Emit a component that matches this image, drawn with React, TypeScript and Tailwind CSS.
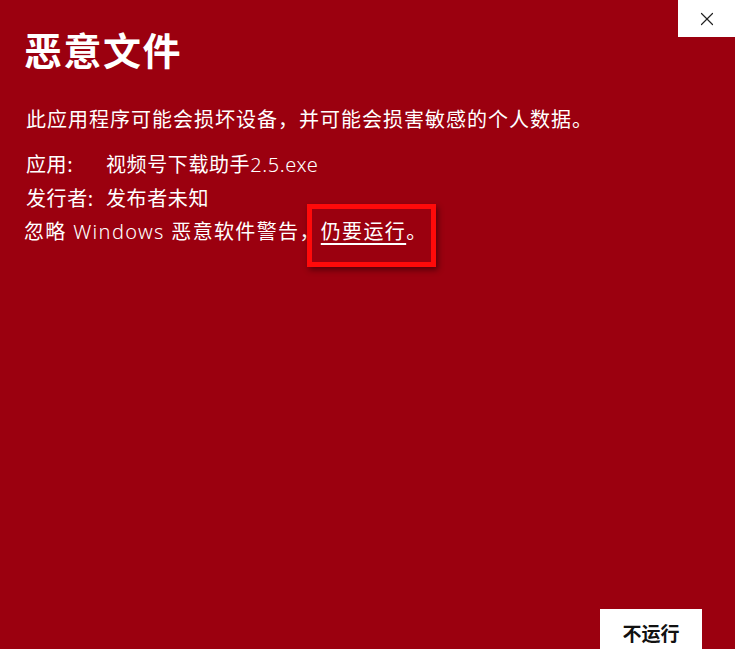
import { X } from 'lucide-react';

const FONT = "font-['Noto_Sans','Noto_Sans_CJK_SC',sans-serif]";

export default function App() {
  return (
    <div className={`relative h-[649px] w-[735px] overflow-hidden bg-[#9b000f] text-white ${FONT}`}>
      {/* close */}
      <button className="absolute right-0 top-0 flex h-[37px] w-[57px] items-center justify-center bg-white text-[#222]">
        <X size={22} strokeWidth={1.3} />
      </button>

      <div className="px-6 pt-[26px]">
        <h1 className="text-[38px] font-bold leading-[48px] tracking-[1.5px]">恶意文件</h1>

        <p className="mt-[31px] pl-[2px] text-[20px] leading-[30px] tracking-[1px]">
          此应用程序可能会损坏设备，并可能会损害敏感的个人数据。
        </p>

        <div className="mt-[13px] text-[20px] leading-[33.5px] tracking-[0.6px]">
          <div className="flex pl-[2px]">
            <span className="w-[80px]">应用:</span>
            <span>
              视频号下载助手<span className="font-light">2.5.exe</span>
            </span>
          </div>
          <div className="flex pl-[2px]">
            <span className="w-[80px]">发行者:</span>
            <span>发布者未知</span>
          </div>
          <div className="tracking-[1.35px]">
            忽略 <span className="font-light">Windows</span> 恶意软件警告，
            <span className="relative">
              <span className="underline underline-offset-4">仍要运行</span>。
              <span className="pointer-events-none absolute left-[-14px] top-[-14px] h-[63px] w-[129px] border-[5px] border-[#ff0a0a] shadow-[2px_3px_6px_rgba(0,0,0,0.45)]" />
            </span>
          </div>
        </div>
      </div>

      <button className="absolute left-[600px] top-[609px] h-[50px] w-[102px] bg-white text-[19px] font-bold text-[#111]">
        不运行
      </button>
    </div>
  );
}
